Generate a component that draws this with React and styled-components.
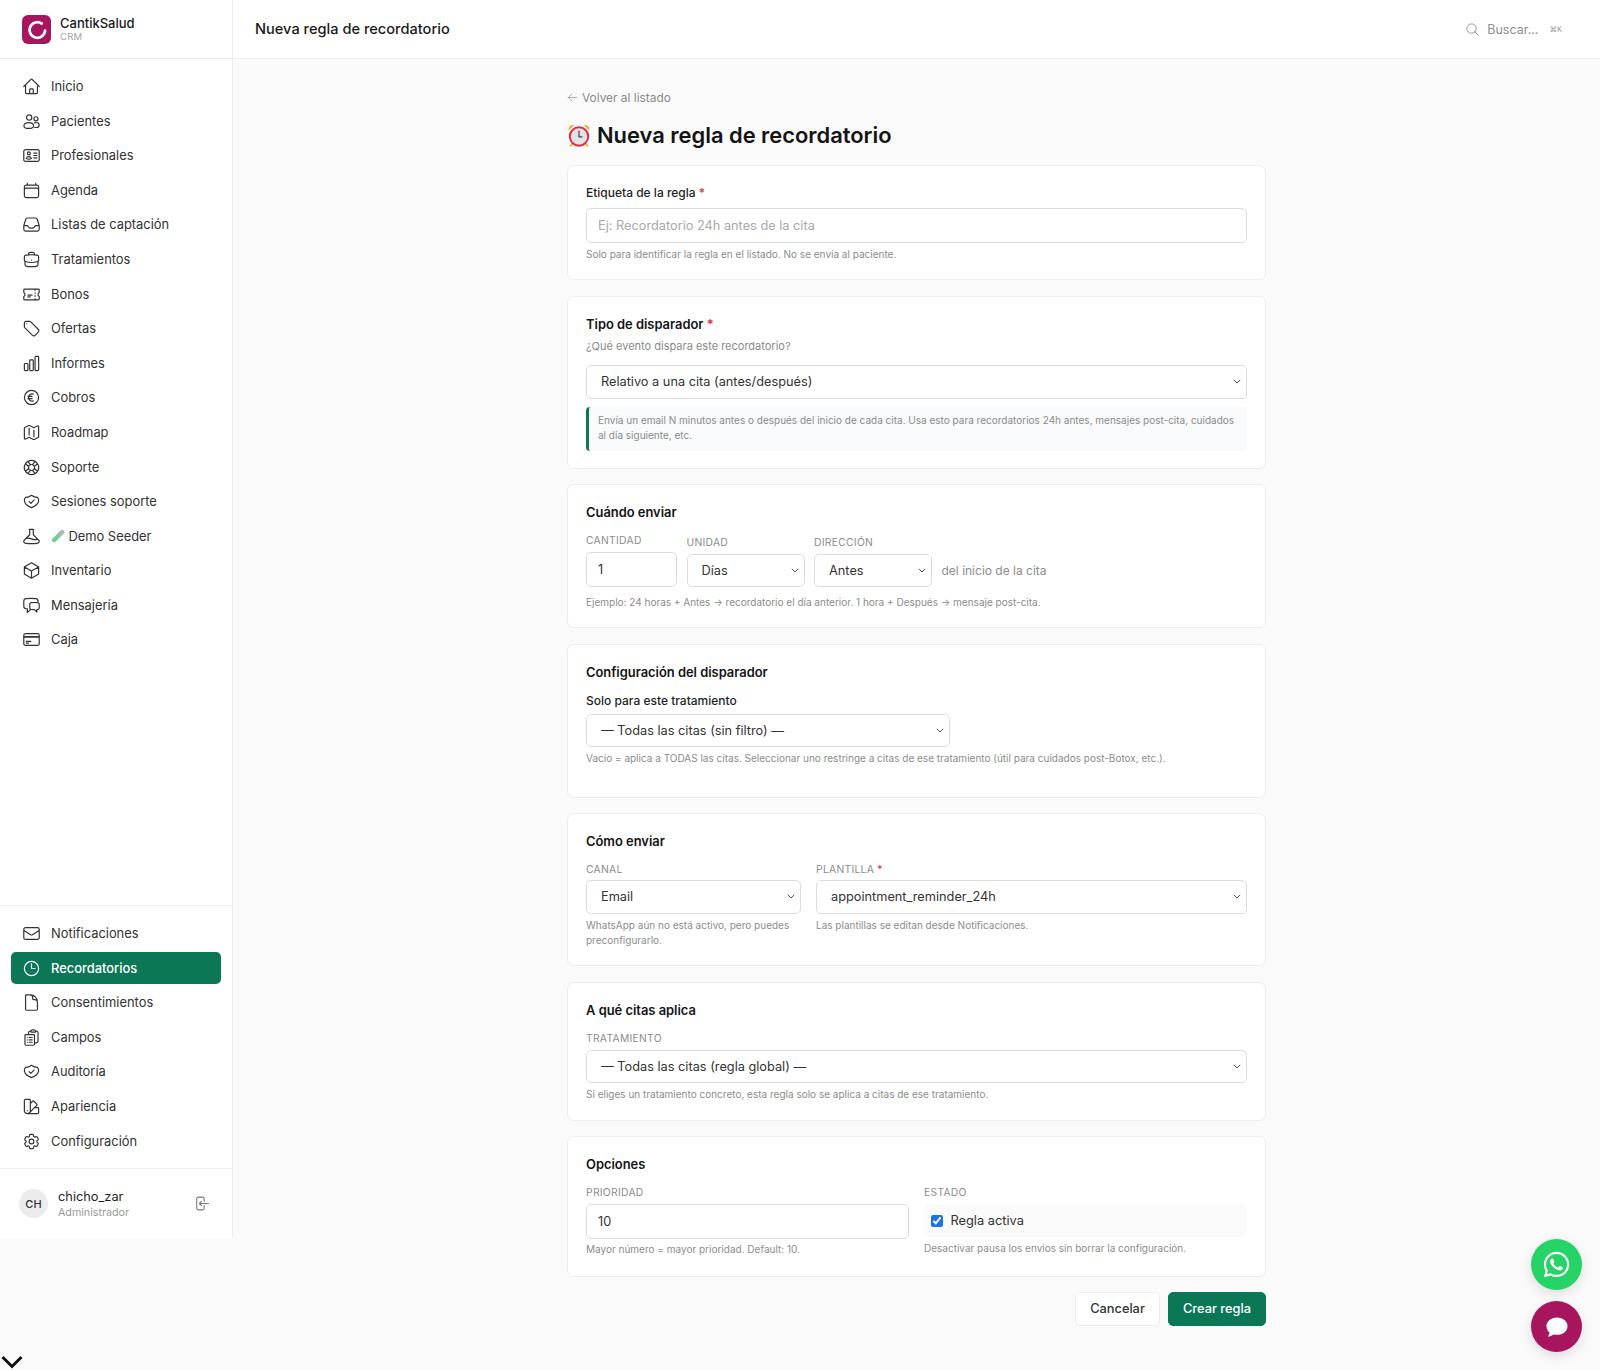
import React from 'react';
import styled, { createGlobalStyle } from 'styled-components';
import { FaWhatsapp } from 'react-icons/fa';
import {
  HiOutlineHome, HiOutlineIdentification, HiOutlineCalendar, HiOutlineInbox, HiOutlineBriefcase,
  HiOutlineTicket, HiOutlineTag, HiOutlineChartBar, HiOutlineCurrencyEuro, HiOutlineMap, HiOutlineLifebuoy,
  HiOutlineBeaker, HiOutlineCube, HiOutlineChatBubbleLeftRight, HiOutlineCreditCard,
  HiOutlineEnvelope, HiOutlineClock, HiOutlineDocument, HiOutlineClipboardDocumentList, HiOutlineSwatch,
  HiOutlineCog6Tooth, HiOutlineArrowLeftOnRectangle, HiOutlineMagnifyingGlass, HiOutlineArrowLeft,
} from 'react-icons/hi2';

const Global = createGlobalStyle`
  html, body { margin: 0; padding: 0; background: #fafafa; }
  body { font-family: Inter, "Liberation Sans", sans-serif; color: #1a1a1a; -webkit-font-smoothing: antialiased; }
  * { box-sizing: border-box; }
`;

const chevronSvg = "data:image/svg+xml,%3Csvg xmlns='http://www.w3.org/2000/svg' width='8' height='5' viewBox='0 0 8 5'%3E%3Cpath d='M.8.8 4 4l3.200-3.200' fill='none' stroke='%23555' stroke-width='1'/%3E%3C/svg%3E";

const Page = styled.div`display: flex; align-items: flex-start; min-height: 1370px; background: #fafafa;`;
const Sidebar = styled.aside`
  width: 233px; height: 1238px; flex: none; background: #fff; border-right: 1px solid #ededed;
  display: flex; flex-direction: column;
`;
const Brand = styled.div`
  height: 59px; flex: none; border-bottom: 1px solid #ededed; display: flex; align-items: center; gap: 9px; padding: 0 22px;
`;
const BrandText = styled.div`display: flex; flex-direction: column; margin-top: -1px;`;
const BrandName = styled.span`font-size: 13px; font-weight: 500; line-height: 15px; color: #1a1a1a;`;
const BrandSub = styled.span`font-size: 9.6px; line-height: 11px; color: #a3a3a3; letter-spacing: .2px;`;
const NavTop = styled.nav`flex: 1; padding: 11.200px 11px 0; display: flex; flex-direction: column; gap: 2px;`;
const NavBottom = styled.nav`padding: 11.200px 11px 0; border-top: 1px solid #ededed; height: 263px; display: flex; flex-direction: column; gap: 2px;`;
const NavItem = styled.a`
  height: 32.600px; flex: none; display: flex; align-items: center; gap: 10px; padding: 0 11px; border-radius: 5px;
  font-size: 12.900px; font-weight: ${p => (p.$active ? 500 : 400)};
  color: ${p => (p.$active ? '#fff' : '#333')}; background: ${p => (p.$active ? '#0b7757' : 'transparent')};
  > svg { width: 19px; height: 19px; flex: none; }
`;
const DemoLabel = styled.span`
  display: inline-flex; align-items: center; gap: 3.400px;
  svg { width: 14px; height: 14px; flex: none; }
`;
const UserBox = styled.div`
  height: 70px; flex: none; border-top: 1px solid #ededed; display: flex; align-items: center; padding: 0 19px; gap: 10px;
`;
const Avatar = styled.div`
  width: 29px; height: 29px; border-radius: 50%; background: #ececec; display: flex; align-items: center; justify-content: center;
  font-size: 11px; font-weight: 500; color: #333; flex: none;
`;
const UserText = styled.div`flex: 1; display: flex; flex-direction: column; gap: 2px;`;
const UserName = styled.span`font-size: 12.800px; line-height: 15px; color: #1f1f1f;`;
const UserRole = styled.span`font-size: 10.700px; line-height: 13px; color: #9a9a9a;`;
const LogoutBtn = styled.span`display: flex; color: #777; margin-right: 3px; svg { width: 17px; height: 17px; }`;

const Main = styled.div`flex: 1; min-width: 0; display: flex; flex-direction: column;`;
const Topbar = styled.header`
  height: 59px; background: #fff; border-bottom: 1px solid #ededed; display: flex; align-items: center; padding: 0 38px 0 22px; justify-content: space-between;
`;
const TopTitle = styled.div`font-size: 14.600px; font-weight: 500; color: #1a1a1a;`;
const Search = styled.div`display: flex; align-items: center; gap: 7px; color: #8f8f8f; font-size: 12.500px; svg { width: 15px; height: 15px; }`;
const Kbd = styled.span`font-size: 7.500px; color: #9a9a9a; margin-left: 4px;`;
const Content = styled.main`width: 699px; margin: 0 auto; padding-top: 29px;`;
const Back = styled.a`display: flex; align-items: center; gap: 4px; height: 18px; font-size: 11.900px; color: #8a8a8a; svg { width: 11px; height: 11px; }`;
const Title = styled.h1`
  margin: 14px 0 15px; height: 30px; display: flex; align-items: center; gap: 6px; font-size: 21.900px; font-weight: 600; color: #141414;
  svg { width: 24px; height: 24px; flex: none; }
`;
const Form = styled.form`display: flex; flex-direction: column; gap: 15.500px;`;
const Card = styled.section`
  background: #fff; border: 1px solid #ededed; border-radius: 7px; padding: 19px 18px 0; height: ${p => p.$h}px; flex: none;
`;
const Label = styled.label`display: block; font-size: 12px; line-height: 16px; font-weight: 500; color: #1f1f1f; margin-bottom: ${p => p.$mb ?? 7}px;`;
const Req = styled.span`color: #dc3545;`;
const CardTitle = styled.h2`margin: 0 0 ${p => p.$mb ?? 8}px; font-size: 12.900px; line-height: 18px; font-weight: 600; color: #141414;`;
const Sub = styled.div`font-size: 11px; line-height: 15px; color: #8a8a8a; margin-bottom: 11.500px;`;
const Input = styled.input`
  display: block; width: 100%; height: 35px; border: 1px solid #dcdcdc; border-radius: 5px; padding: 0 11px; background: #fff;
  font: 400 12.750px Inter, sans-serif; color: #333; outline: none;
  &::placeholder { color: #a9a9a9; }
`;
const Select = styled.select`
  display: block; width: 100%; height: 33.500px; border: 1px solid #dcdcdc; border-radius: 5px; padding: 0 22px 0 14px;
  appearance: none; background: #fff url("${chevronSvg}") no-repeat right 5px center;
  font: 400 12.750px Inter, sans-serif; color: #333; outline: none;
`;
const Hint = styled.p`margin: ${p => p.$mt ?? 4}px 0 0; font-size: 10px; line-height: 15.500px; color: #8c8c8c;`;
const Info = styled.div`
  margin-top: 8px; border-left: 3px solid #0b7757; border-radius: 4px; background: #f8fafb; padding: 6px 12px 0 9px; height: 44px;
  font-size: 10px; line-height: 15px; color: #8c8c8c;
`;
const MiniLabel = styled.div`font-size: 10.300px; line-height: 13px; letter-spacing: .3px; color: #8c8c8c; margin-bottom: ${p => p.$mb ?? 4}px; text-transform: uppercase;`;
const WhenRow = styled.div`display: flex; align-items: flex-end; gap: 9.500px;`;
const Field = styled.div`width: ${p => p.$w}px; flex: none; min-width: 0;`;
const RowText = styled.span`font-size: 12px; line-height: 33px; color: #8c8c8c;`;
const Columns = styled.div`display: grid; grid-template-columns: ${p => p.$cols}; gap: 15px;`;
const StateBox = styled.label`
  height: 33px; background: #fafafa; border-radius: 5px; display: flex; align-items: center; gap: 7.500px; padding: 0 7px; font-size: 12.800px; color: #333;
  input { margin: 0; width: 12px; height: 12px; accent-color: #1a73e8; }
`;
const Actions = styled.div`display: flex; justify-content: flex-end; gap: 8px; margin-top: 14.500px; padding-bottom: 44px;`;
const Button = styled.button`
  height: 34px; border-radius: 5px; font: 500 12.800px Inter, sans-serif; padding: 0; width: ${p => p.$w}px;
  border: 1px solid ${p => (p.$primary ? '#0b7757' : '#ededed')};
  background: ${p => (p.$primary ? '#0b7757' : '#fff')}; color: ${p => (p.$primary ? '#fff' : '#333')};
`;
const Fab = styled.button`
  position: fixed; left: 1531px; top: ${p => p.$top}px; width: 51px; height: 51px; border-radius: 50%; border: 0; padding: 0;
  background: ${p => p.$bg}; color: #fff; display: flex; align-items: center; justify-content: center;
  box-shadow: 0 4px 12px rgba(0,0,0,.12);
`;
const Chevron = styled.svg`position: fixed; left: 0; top: 1354px; width: 24px; height: 15px;`;

const PeopleIcon = () => (
  <svg viewBox="0 0 24 24" fill="none" stroke="currentColor" strokeWidth="1.5" strokeLinecap="round" strokeLinejoin="round">
    <circle cx="9" cy="7" r="3.4" /><circle cx="17.6" cy="8.6" r="2.6" />
    <path d="M2.4 17.6c0-2.4 2.6-4.2 6.2-4.2 3.6 0 6 1.8 6 4.2 0 2-2.4 3.2-6 3.2s-6.2-1.2-6.2-3.2z" />
    <path d="M15.6 13.7c.7-.3 1.4-.4 2.2-.4 2.3 0 3.900 1.400 3.900 3.300 0 1.800-1.600 3-3.800 3-.7 0-1.400-.1-2-.3" />
  </svg>
);
const ShieldCheckIcon = () => (
  <svg viewBox="0 0 24 24" fill="none" stroke="currentColor" strokeWidth="1.5" strokeLinecap="round" strokeLinejoin="round">
    <path d="M12 4.200c2 1.600 4.600 2.600 7.600 2.600 1.200 1.400 1.600 3 1.400 4.400-.6 4-3.800 6.600-9 8.600-5.200-2-8.400-4.600-9-8.600-.2-1.400.2-3 1.400-4.400 3 0 5.600-1 7.600-2.600z" />
    <path d="M9 12.200l2.200 2.200 4.200-4.400" />
  </svg>
);
const LogoMark = () => (
  <svg width="29" height="29" viewBox="0 0 29 29">
    <rect width="29" height="29" rx="6" fill="#a8155f" />
    <path d="M19.800 8.600A7.800 7.800 0 1 0 23.100 15.700" fill="none" stroke="#fff" strokeWidth="2.700" strokeLinecap="round" />
  </svg>
);
const AlarmIcon = () => (
  <svg viewBox="0 0 24 24">
    <path d="M1.600 7.500a4.600 4.600 0 0 1 5.600-5.400z" fill="#f5a623" /><path d="M22.400 7.500a4.600 4.600 0 0 0-5.600-5.400z" fill="#f5a623" />
    <path d="M5 21l-1.600 2M19 21l1.600 2" stroke="#f5a623" strokeWidth="1.600" strokeLinecap="round" />
    <circle cx="12" cy="13.500" r="9.200" fill="#dfe3e8" stroke="#dd2e44" strokeWidth="2" />
    <path d="M12 8v5.800l3 0" fill="none" stroke="#444" strokeWidth="1.200" strokeLinecap="round" />
  </svg>
);
const TubeIcon = () => (
  <svg viewBox="0 0 14 14">
    <path d="M3.200 11l6.500-6.500" stroke="#6fcf97" strokeWidth="4.400" strokeLinecap="round" fill="none" />
    <path d="M9.700 4.500l1.400-1.400" stroke="#a8bdb0" strokeWidth="4.400" strokeLinecap="round" fill="none" />
  </svg>
);
const ChatIcon = () => (
  <svg width="24" height="24" viewBox="0 0 24 24" fill="#fff">
    <path d="M12 2.500C17.800 2.500 22.500 6.100 22.500 11.200S17.800 19.800 12 19.800c-1 0-2-.1-2.900-.3L3.700 21.800c-.4.100-.7-.3-.5-.6l1.500-3.500C2.900 16.200 1.500 13.900 1.500 11.200 1.500 6.100 6.200 2.500 12 2.500z" />
  </svg>
);

const top = [
  ['Inicio', HiOutlineHome], ['Pacientes', PeopleIcon], ['Profesionales', HiOutlineIdentification], ['Agenda', HiOutlineCalendar],
  ['Listas de captación', HiOutlineInbox], ['Tratamientos', HiOutlineBriefcase], ['Bonos', HiOutlineTicket], ['Ofertas', HiOutlineTag],
  ['Informes', HiOutlineChartBar], ['Cobros', HiOutlineCurrencyEuro], ['Roadmap', HiOutlineMap], ['Soporte', HiOutlineLifebuoy],
  ['Sesiones soporte', ShieldCheckIcon], ['Demo Seeder', HiOutlineBeaker, true], ['Inventario', HiOutlineCube],
  ['Mensajería', HiOutlineChatBubbleLeftRight], ['Caja', HiOutlineCreditCard],
];
const bottom = [
  ['Notificaciones', HiOutlineEnvelope], ['Recordatorios', HiOutlineClock], ['Consentimientos', HiOutlineDocument],
  ['Campos', HiOutlineClipboardDocumentList], ['Auditoría', ShieldCheckIcon], ['Apariencia', HiOutlineSwatch], ['Configuración', HiOutlineCog6Tooth],
];

const Item = ({ label, Icon, demo }) => (
  <NavItem $active={label === 'Recordatorios'}>
    <Icon />
    {demo ? <DemoLabel><TubeIcon />{label}</DemoLabel> : label}
  </NavItem>
);

export default function App() {
  return (
    <Page>
      <Global />
      <Sidebar>
        <Brand><LogoMark /><BrandText><BrandName>CantikSalud</BrandName><BrandSub>CRM</BrandSub></BrandText></Brand>
        <NavTop>{top.map(([l, I, d]) => <Item key={l} label={l} Icon={I} demo={d} />)}</NavTop>
        <NavBottom>{bottom.map(([l, I]) => <Item key={l} label={l} Icon={I} />)}</NavBottom>
        <UserBox>
          <Avatar>CH</Avatar>
          <UserText><UserName>chicho_zar</UserName><UserRole>Administrador</UserRole></UserText>
          <LogoutBtn><HiOutlineArrowLeftOnRectangle /></LogoutBtn>
        </UserBox>
      </Sidebar>
      <Main>
        <Topbar>
          <TopTitle>Nueva regla de recordatorio</TopTitle>
          <Search><HiOutlineMagnifyingGlass />Buscar...<Kbd>⌘K</Kbd></Search>
        </Topbar>
        <Content>
          <Back><HiOutlineArrowLeft />Volver al listado</Back>
          <Title><AlarmIcon />Nueva regla de recordatorio</Title>
          <Form>
            <Card $h={115}>
              <Label $mb={7}>Etiqueta de la regla <Req>*</Req></Label>
              <Input placeholder="Ej: Recordatorio 24h antes de la cita" />
              <Hint>Solo para identificar la regla en el listado. No se envía al paciente.</Hint>
            </Card>
            <Card $h={173}>
              <CardTitle $mb={5}>Tipo de disparador <Req>*</Req></CardTitle>
              <Sub>¿Qué evento dispara este recordatorio?</Sub>
              <Select defaultValue="a"><option value="a">Relativo a una cita (antes/después)</option></Select>
              <Info>Envía un email N minutos antes o después del inicio de cada cita. Usa esto para recordatorios 24h antes, mensajes post-cita, cuidados al día siguiente, etc.</Info>
            </Card>
            <Card $h={144}>
              <CardTitle $mb={12}>Cuándo enviar</CardTitle>
              <WhenRow>
                <Field $w={91}><MiniLabel $mb={5}>Cantidad</MiniLabel><Input defaultValue="1" /></Field>
                <Field $w={118}><MiniLabel $mb={5}>Unidad</MiniLabel><Select defaultValue="d"><option value="d">Días</option></Select></Field>
                <Field $w={118}><MiniLabel $mb={5}>Dirección</MiniLabel><Select defaultValue="a"><option value="a">Antes</option></Select></Field>
                <RowText>del inicio de la cita</RowText>
              </WhenRow>
              <Hint $mt={8}>Ejemplo: 24 horas + Antes → recordatorio el día anterior. 1 hora + Después → mensaje post-cita.</Hint>
            </Card>
            <Card $h={154}>
              <CardTitle $mb={11}>Configuración del disparador</CardTitle>
              <Label $mb={5}>Solo para este tratamiento</Label>
              <Field $w={364}><Select defaultValue="a"><option value="a">— Todas las citas (sin filtro) —</option></Select></Field>
              <Hint>Vacío = aplica a TODAS las citas. Seleccionar uno restringe a citas de ese tratamiento (útil para cuidados post-Botox, etc.).</Hint>
            </Card>
            <Card $h={153}>
              <CardTitle $mb={12}>Cómo enviar</CardTitle>
              <Columns $cols="215px 1fr">
                <div><MiniLabel>Canal</MiniLabel><Select defaultValue="e"><option value="e">Email</option></Select>
                  <Hint>WhatsApp aún no está activo, pero puedes preconfigurarlo.</Hint></div>
                <div><MiniLabel>Plantilla <Req>*</Req></MiniLabel><Select defaultValue="a"><option value="a">appointment_reminder_24h</option></Select>
                  <Hint>Las plantillas se editan desde Notificaciones.</Hint></div>
              </Columns>
            </Card>
            <Card $h={139}>
              <CardTitle $mb={12}>A qué citas aplica</CardTitle>
              <MiniLabel $mb={5}>Tratamiento</MiniLabel>
              <Select defaultValue="a"><option value="a">— Todas las citas (regla global) —</option></Select>
              <Hint>Si eliges un tratamiento concreto, esta regla solo se aplica a citas de ese tratamiento.</Hint>
            </Card>
            <Card $h={141}>
              <CardTitle $mb={12}>Opciones</CardTitle>
              <Columns $cols="1fr 1fr">
                <div><MiniLabel $mb={5}>Prioridad</MiniLabel><Input defaultValue="10" /><Hint $mt={3}>Mayor número = mayor prioridad. Default: 10.</Hint></div>
                <div><MiniLabel $mb={5}>Estado</MiniLabel><StateBox><input type="checkbox" defaultChecked />Regla activa</StateBox><Hint $mt={4}>Desactivar pausa los envíos sin borrar la configuración.</Hint></div>
              </Columns>
            </Card>
          </Form>
          <Actions>
            <Button type="button" $w={85}>Cancelar</Button>
            <Button type="button" $primary $w={98}>Crear regla</Button>
          </Actions>
        </Content>
      </Main>
      <Fab $top={1239} $bg="#25d366"><FaWhatsapp size={29} /></Fab>
      <Fab $top={1301} $bg="#a8155f"><ChatIcon /></Fab>
      <Chevron viewBox="0 0 24 15"><path d="M2.500 3l9.500 9.500L21.500 3" fill="none" stroke="#111" strokeWidth="3" /></Chevron>
    </Page>
  );
}
